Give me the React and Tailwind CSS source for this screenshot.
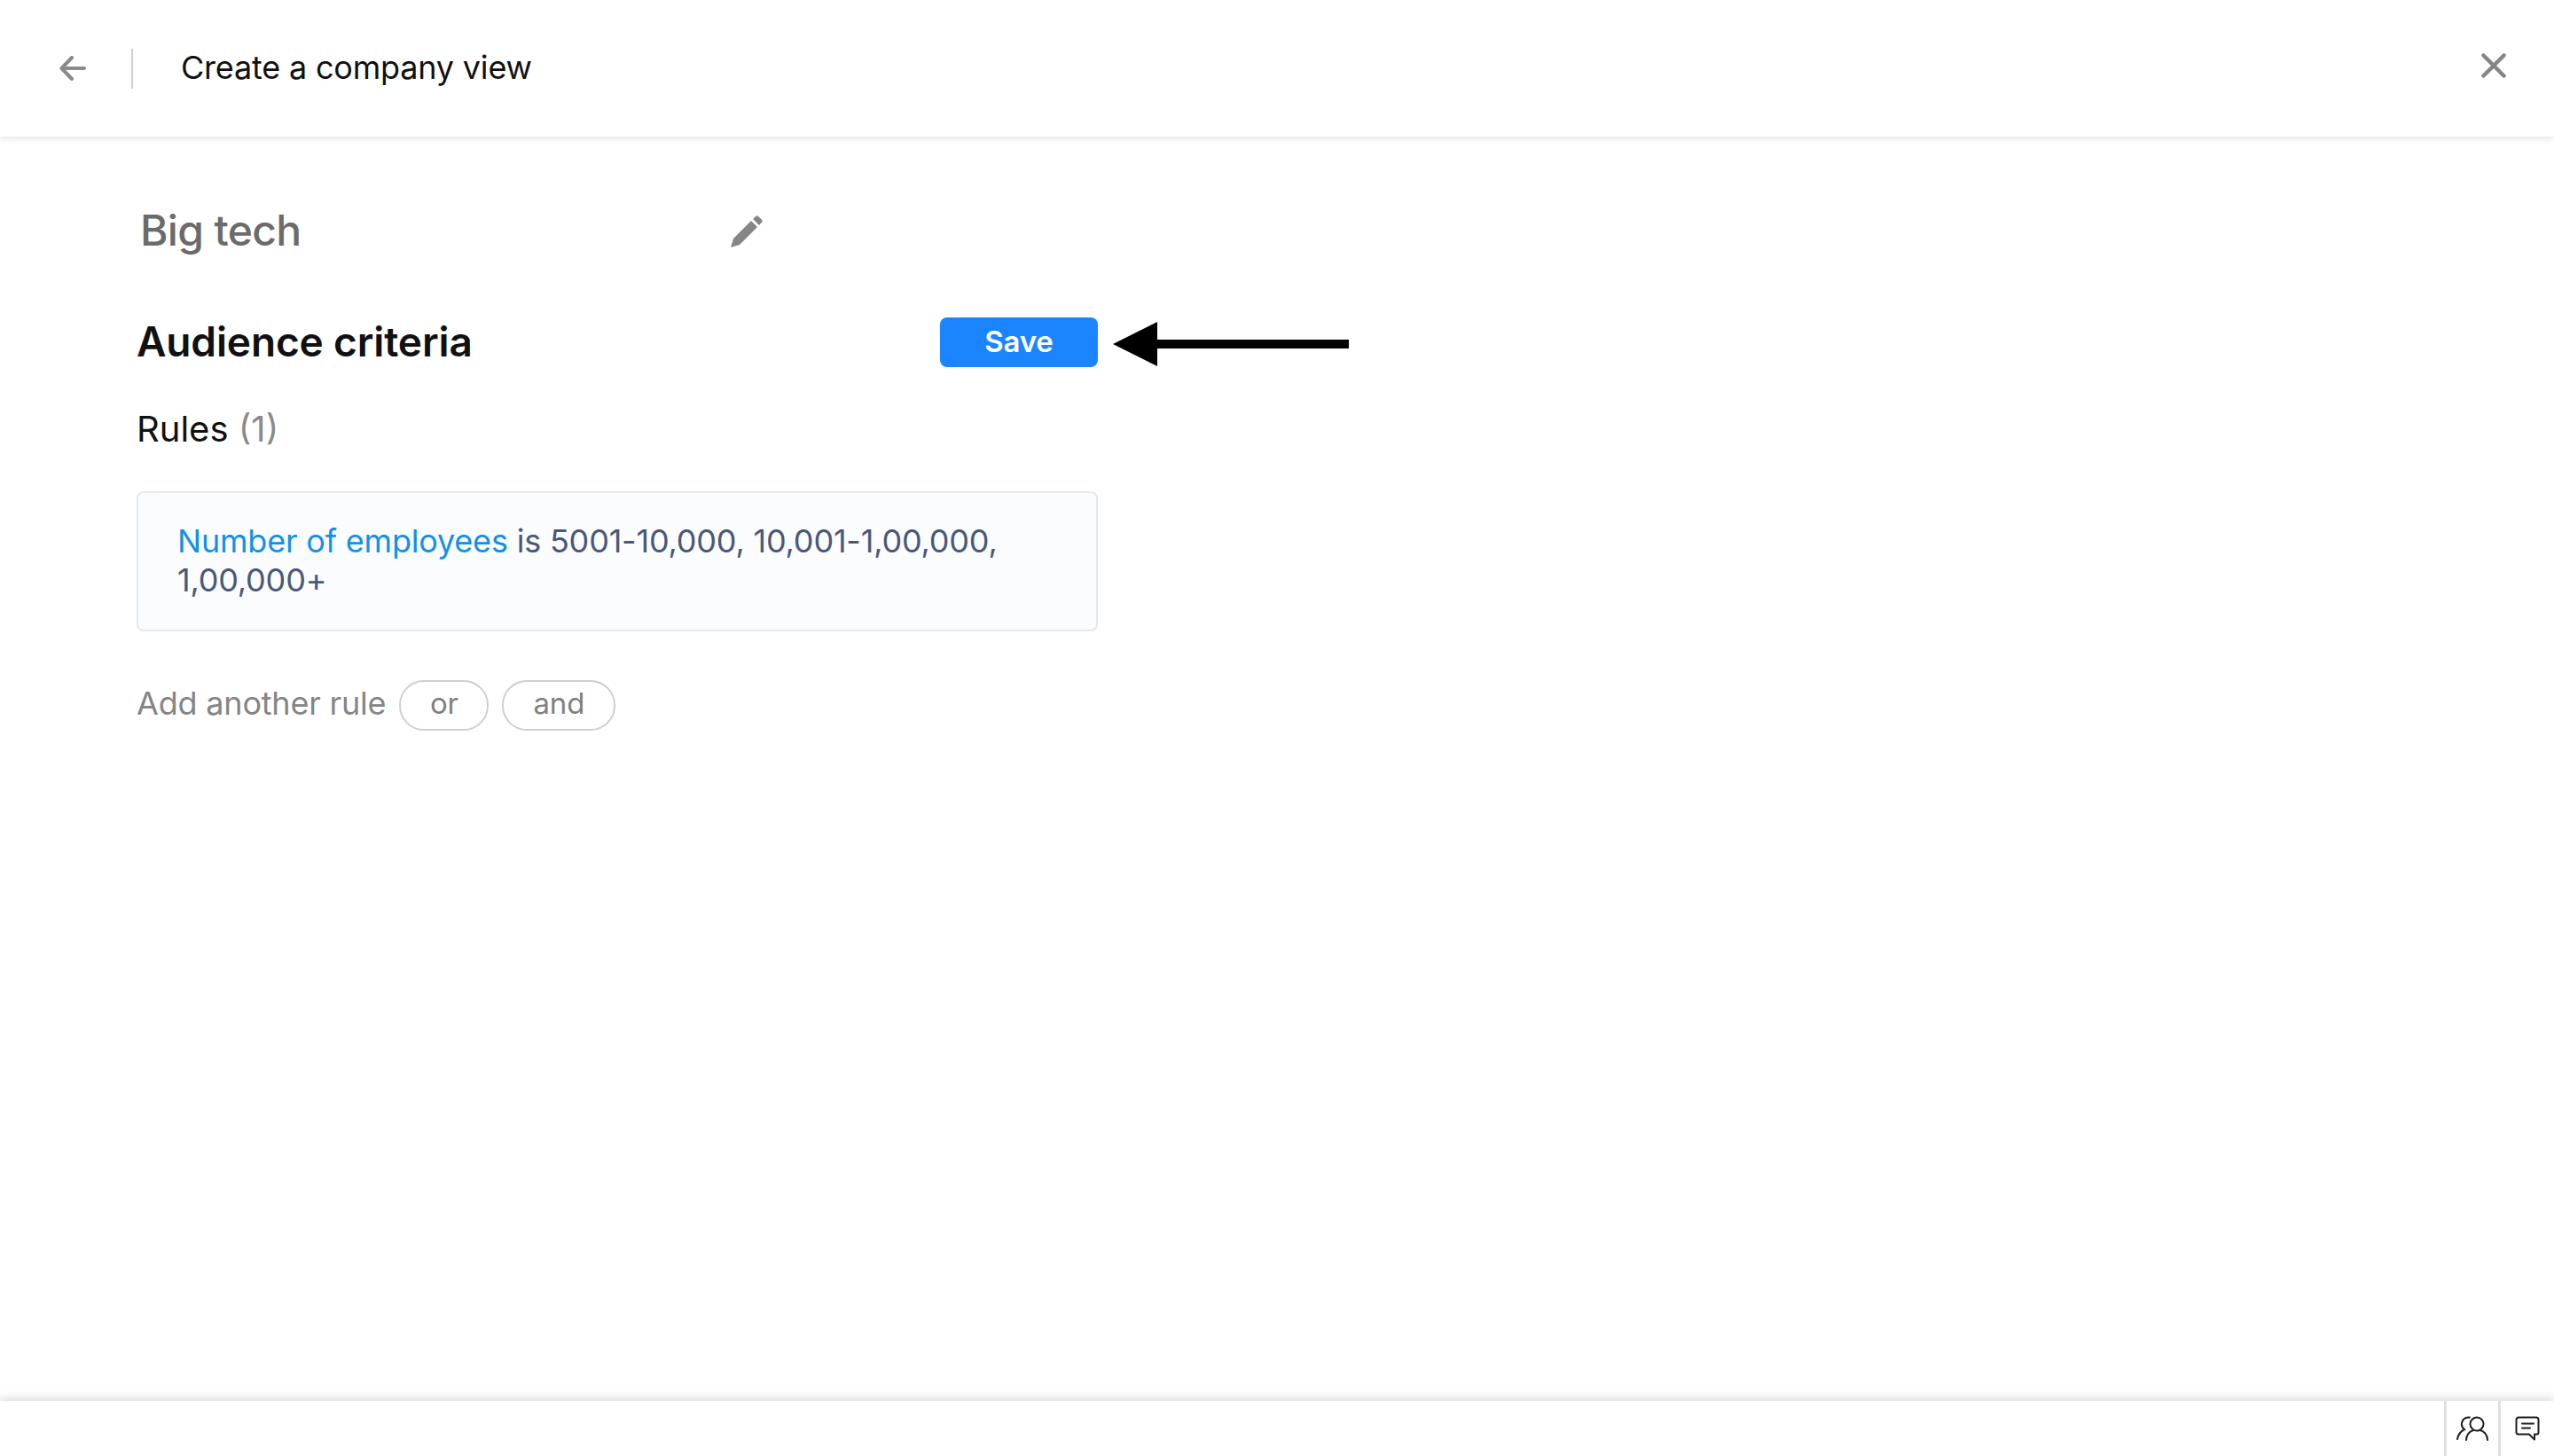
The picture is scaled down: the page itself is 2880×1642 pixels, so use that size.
import { useState } from "react";

const BackIcon = () => (
  <svg width="30" height="28" viewBox="0 0 30 28" fill="none" stroke="#8a8a8a" strokeWidth="4" strokeLinecap="round" strokeLinejoin="round">
    <path d="M28 14H3" />
    <path d="M14 2 2.500 14 14 26" />
  </svg>
);

const CloseIcon = () => (
  <svg width="28" height="28" viewBox="0 0 28 28" fill="none" stroke="#858585" strokeWidth="4.500" strokeLinecap="round">
    <path d="M2.500 2.500l23 23M25.500 2.500l-23 23" />
  </svg>
);

const PencilIcon = () => (
  <svg width="36" height="36" viewBox="0 0 36 36" fill="#858585">
    <path d="M0 36 3 26 23 6 30 13 10 33Z" />
    <path d="M25 4 28 1.200a2.400 2.400 0 0 1 3.400 0L34.800 4.600a2.400 2.400 0 0 1 0 3.400L32 11Z" />
  </svg>
);

const PointerArrow = () => (
  <svg width="266" height="50" viewBox="0 0 266 50" fill="#000">
    <path d="M0 25 50 0V20H266V30H50V50Z" />
  </svg>
);

const PeopleIcon = () => (
  <svg width="36" height="28" viewBox="0 0 36 28" fill="none" stroke="#1f1f1f" strokeWidth="2" strokeLinecap="round">
    <circle cx="23" cy="9" r="7.500" />
    <path d="M11 27c0-6 4-10 8-11M35 27c0-6-4-10-8-11" />
    <path d="M15 1.500h-2a7.500 7.500 0 0 0-4 13.500C5 17 2 21 1 26" />
  </svg>
);

const ChatIcon = () => (
  <svg width="28" height="28" viewBox="0 0 28 28" fill="none" stroke="#1f1f1f" strokeWidth="2" strokeLinejoin="round" strokeLinecap="round">
    <path d="M4 1.500h20a2.500 2.500 0 0 1 2.500 2.500v14.500a2 2 0 0 1-2 2H22v6l-6-6H4a2.500 2.500 0 0 1-2.500-2.500V4A2.500 2.500 0 0 1 4 1.500Z" />
    <path d="M8 8.500h13M8 13.500h9" />
  </svg>
);

const RulePill = ({ label, width }) => (
  <button className={`h-[57px] rounded-[28px] border-2 border-[#cfcfcf] bg-white pb-[2px] text-[33px] text-[#808080] ${width}`}>
    {label}
  </button>
);

const App = () => {
  const [rules] = useState(1);

  return (
    <div className="flex h-[1642px] flex-col bg-white font-['Inter',sans-serif] tracking-[-0.012em]">
      <header className="flex h-[154px] shrink-0 items-center justify-between bg-white pl-[67px] pr-[54px] shadow-[0_2px_8px_rgba(0,0,0,0.12)]">
        <div className="flex items-center">
          <BackIcon />
          <div className="ml-[51px] h-[45px] w-[2px] bg-[#d0d0d0]" />
          <h1 className="mb-[3px] ml-[54px] text-[36px] leading-[44px] text-[#111]">Create a company view</h1>
        </div>
        <div className="mb-[6px]">
          <CloseIcon />
        </div>
      </header>

      <main className="flex-1 pl-[154px] pt-[76px]">
        <div className="flex h-[60px] w-[706px] items-center justify-between pl-[4px]">
          <span className="text-[48px] font-medium leading-[60px] tracking-[-0.014em] text-[#6b6b6b]">Big tech</span>
          <div className="mt-[2px]">
            <PencilIcon />
          </div>
        </div>

        <div className="mt-[68px] flex h-[56px] items-center">
          <div className="flex w-[1084px] items-center justify-between">
            <h2 className="mb-[2px] text-[46px] font-semibold leading-[54px] tracking-[-0.003em] text-[#111]">Audience criteria</h2>
            <button className="h-[56px] w-[178px] rounded-lg bg-[#1a85ff] text-[33px] font-semibold text-white">Save</button>
          </div>
          <div className="ml-[17px] mt-[3px]">
            <PointerArrow />
          </div>
        </div>

        <div className="mt-[45px] text-[40px] leading-[50px] tracking-normal text-[#111]">
          Rules <span className="text-[#8a8a8a]">({rules})</span>
        </div>

        <div className="mt-[45px] w-[1084px] rounded-lg border-2 border-[#e3e8ef] bg-[#fbfcfe] px-[44px] pb-[34px] pt-[32px] text-[36px] leading-[44px] text-[#4a5878]">
          <span className="text-[#1490e8]">Number of employees</span> is 5001-10,000, 10,001-1,00,000, 1,00,000+
        </div>

        <div className="mt-[54px] flex items-center gap-[15px]">
          <span className="mb-[4px] text-[36px] text-[#858585]">Add another rule</span>
          <RulePill label="or" width="w-[101px]" />
          <RulePill label="and" width="w-[128px]" />
        </div>
      </main>

      <footer className="flex h-[62px] shrink-0 justify-end bg-white shadow-[0_-3px_10px_rgba(0,0,0,0.15)]">
        <div className="flex w-[61px] items-center justify-center border-l-[3px] border-[#e0e0e0]">
          <PeopleIcon />
        </div>
        <div className="flex w-[63px] items-center justify-center border-l-[3px] border-[#e0e0e0]">
          <ChatIcon />
        </div>
      </footer>
    </div>
  );
};

export default App;
